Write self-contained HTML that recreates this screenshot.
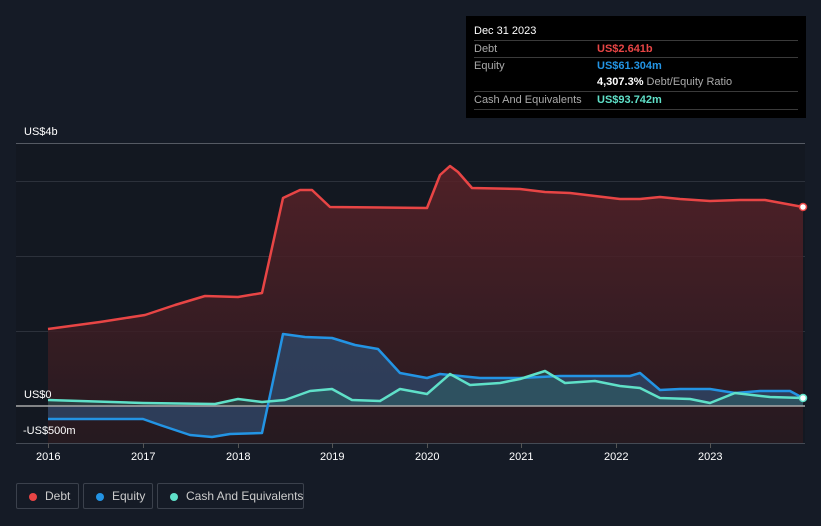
<!DOCTYPE html>
<html><head><meta charset="utf-8"><style>
html,body{margin:0;width:821px;height:526px;overflow:hidden}
body{background:#151b26;font-family:"Liberation Sans",sans-serif;position:relative}
.tt{position:absolute;left:466px;top:16px;width:340px;height:102px;background:#000;color:#fff;font-size:11px}
.tt .h{position:absolute;left:8px;top:9px;font-size:11px}
.row{position:absolute;left:8px;width:324px;border-top:1px solid #3a3a3a;height:16px;line-height:16px;white-space:nowrap}
.row .l{color:#aaa;position:absolute;left:0}
.row .v{position:absolute;left:123px;font-weight:bold}
.leg{position:absolute;top:483px;height:26px;border:1px solid #3b414c;border-radius:2px;color:#ccc;font-size:12px;line-height:24px;box-sizing:border-box;white-space:nowrap}
.leg i{position:absolute;left:12px;top:9px;width:8px;height:8px;border-radius:50%}
.leg span{position:absolute;left:28px}
.ax{position:absolute;color:#fff;font-size:11px;white-space:nowrap}
</style></head><body>
<svg width="821" height="526" style="position:absolute;left:0;top:0">
<rect x="16" y="143" width="789" height="300" fill="#131821"/>
<g stroke="#2c313b" stroke-width="1">
<line x1="16" y1="143.5" x2="805" y2="143.5" stroke="#555a63"/>
<line x1="16" y1="181.5" x2="805" y2="181.5"/>
<line x1="16" y1="256.5" x2="805" y2="256.5"/>
<line x1="16" y1="331.5" x2="805" y2="331.5"/>
<line x1="16" y1="443.5" x2="805" y2="443.5" stroke="#444a54"/>
</g>
<g stroke="#555" stroke-width="1">
<line x1="48.5" y1="443" x2="48.5" y2="448"/><line x1="143.5" y1="443" x2="143.5" y2="448"/><line x1="238.5" y1="443" x2="238.5" y2="448"/><line x1="332.5" y1="443" x2="332.5" y2="448"/><line x1="427.5" y1="443" x2="427.5" y2="448"/><line x1="521.5" y1="443" x2="521.5" y2="448"/><line x1="616.5" y1="443" x2="616.5" y2="448"/><line x1="710.5" y1="443" x2="710.5" y2="448"/>
</g>
<defs><linearGradient id="gd" x1="0" y1="0" x2="0" y2="1"><stop offset="0" stop-color="#5a2228" stop-opacity=".85"/><stop offset="1" stop-color="#2a1a20" stop-opacity=".8"/></linearGradient></defs>
<path d="M48,329 L100,322 L145,315 L175,305 L205,296 L238,297 L262,293 L283,198 L300,190 L312,190 L330,207 L427,208 L440,175 L450,166 L458,172 L472,188 L520,189 L545,192 L570,193 L620,199 L640,199 L660,197 L680,199 L710,201 L740,200 L765,200 L803,207 L803,443 L48,443Z" fill="url(#gd)"/>
<path d="M48,419 L143,419 L160,425 L190,435 L212,437 L230,434 L262,433 L283,334 L305,337 L332,338 L355,345 L378,349 L400,373 L427,378 L440,374 L480,378 L520,378 L560,376 L630,376 L640,373 L660,390 L680,389 L710,389 L735,393 L760,391 L790,391 L803,398 L803,406 L48,406Z" fill="#2f4a6c" fill-opacity=".75"/>
<path d="M48,400 L143,403 L215,404 L238,399 L262,402 L285,400 L310,391 L332,389 L352,400 L380,401 L400,389 L427,394 L450,374 L470,385 L500,383 L520,379 L545,371 L565,383 L595,381 L620,386 L640,388 L660,398 L690,399 L710,403 L735,393 L770,397 L803,398 L803,406 L48,406Z" fill="#2f6a68" fill-opacity=".45"/>
<line x1="16" y1="406" x2="805" y2="406" stroke="#a8a8a8" stroke-width="1.5"/>
<g fill="none" stroke-width="2.5" stroke-linejoin="round">
<path d="M48,329 L100,322 L145,315 L175,305 L205,296 L238,297 L262,293 L283,198 L300,190 L312,190 L330,207 L427,208 L440,175 L450,166 L458,172 L472,188 L520,189 L545,192 L570,193 L620,199 L640,199 L660,197 L680,199 L710,201 L740,200 L765,200 L803,207" stroke="#e84545"/>
<path d="M48,419 L143,419 L160,425 L190,435 L212,437 L230,434 L262,433 L283,334 L305,337 L332,338 L355,345 L378,349 L400,373 L427,378 L440,374 L480,378 L520,378 L560,376 L630,376 L640,373 L660,390 L680,389 L710,389 L735,393 L760,391 L790,391 L803,398" stroke="#2394e4"/>
<path d="M48,400 L143,403 L215,404 L238,399 L262,402 L285,400 L310,391 L332,389 L352,400 L380,401 L400,389 L427,394 L450,374 L470,385 L500,383 L520,379 L545,371 L565,383 L595,381 L620,386 L640,388 L660,398 L690,399 L710,403 L735,393 L770,397 L803,398" stroke="#5fe0c8"/>
</g>
<circle cx="803" cy="207" r="3.5" fill="#fff" stroke="#e84545" stroke-width="1.5"/>
<circle cx="803" cy="398" r="3.5" fill="#fff" stroke="#5fe0c8" stroke-width="1.5"/>
</svg>
<div class="ax" style="left:24px;top:126px">US$4b</div>
<div class="ax" style="left:24px;top:389px">US$0</div>
<div class="ax" style="left:23px;top:425px">-US$500m</div>
<div class="ax" style="left:36px;top:451px">2016</div>
<div class="ax" style="left:131px;top:451px">2017</div>
<div class="ax" style="left:226px;top:451px">2018</div>
<div class="ax" style="left:320px;top:451px">2019</div>
<div class="ax" style="left:415px;top:451px">2020</div>
<div class="ax" style="left:509px;top:451px">2021</div>
<div class="ax" style="left:604px;top:451px">2022</div>
<div class="ax" style="left:698px;top:451px">2023</div>
<div class="tt">
<div class="h">Dec 31 2023</div>
<div class="row" style="top:24px"><span class="l">Debt</span><span class="v" style="color:#e84545">US$2.641b</span></div>
<div class="row" style="top:41px"><span class="l">Equity</span><span class="v" style="color:#2394e4">US$61.304m</span></div>
<div class="row" style="top:58px;border-top:none"><span class="v" style="color:#fff">4,307.3% <span style="color:#aaa;font-weight:normal">Debt/Equity Ratio</span></span></div>
<div class="row" style="top:75px"><span class="l">Cash And Equivalents</span><span class="v" style="color:#5fe0c8">US$93.742m</span></div>
<div class="row" style="top:93px;height:0"></div>
</div>
<div class="leg" style="left:16px;width:63px"><i style="background:#e84545"></i><span>Debt</span></div>
<div class="leg" style="left:83px;width:70px"><i style="background:#2394e4"></i><span>Equity</span></div>
<div class="leg" style="left:157px;width:147px"><i style="background:#5fe0c8"></i><span>Cash And Equivalents</span></div>
</body></html>
